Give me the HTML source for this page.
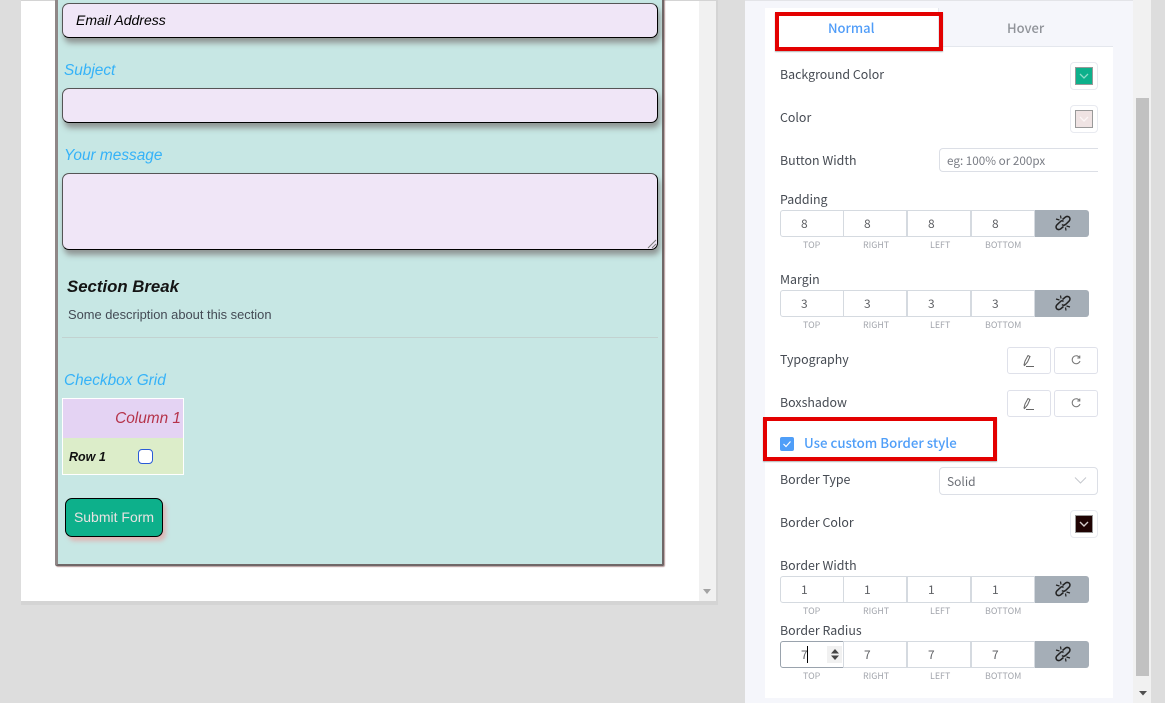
<!DOCTYPE html>
<html><head><meta charset="utf-8">
<style>
html,body{margin:0;padding:0;width:1165px;height:703px;overflow:hidden;background:#dddddd;font-family:"Liberation Sans",sans-serif}
.a{position:absolute;box-sizing:border-box}
.t{position:absolute;white-space:nowrap;line-height:16px}
.inp{position:absolute;left:62px;width:596px;background:#f0e6f7;border:1px solid #000;border-top-color:#555;border-left-color:#555;border-radius:7px;box-shadow:2px 5px 6px rgba(90,70,70,.5);box-sizing:border-box}
.lab{position:absolute;left:64px;color:#35b2f8;font-style:italic;font-size:15.4px;line-height:18px;white-space:nowrap}
.s{font-family:"Noto Sans CJK JP","Liberation Sans",sans-serif;font-size:12.4px;color:#464b53}
.box{position:absolute;height:27px;background:#fff;border:1px solid #d5dae0;box-sizing:border-box;top:0;width:64px;font-size:12px;color:#606266;line-height:25px;font-family:"Noto Sans CJK JP","Liberation Sans",sans-serif}
.box span{position:absolute;left:20px}
.cap{position:absolute;top:29px;font-size:8.9px;color:#a3a6ad;line-height:11px;font-family:"Noto Sans CJK JP","Liberation Sans",sans-serif;white-space:nowrap}
.grp{position:absolute;left:780px;width:310px;height:42px}
.link{position:absolute;left:255px;top:0;width:54px;height:27px;background:#a5aeb7;border-radius:0 3px 3px 0}
.link svg{position:absolute;left:19px;top:4px}
.sw{position:absolute;left:1070px;width:28px;height:28px;background:#fff;border:1px solid #e8eaf0;border-radius:4px;box-sizing:border-box}
.sw i{position:absolute;left:4px;top:4px;width:18px;height:18px;border:1px solid #999;box-sizing:border-box;display:block}
.sw svg{position:absolute;left:4px;top:4px}
.btn{position:absolute;width:44px;height:27px;background:#fff;border:1px solid #dfe1ea;border-radius:3px;box-sizing:border-box}
.red{position:absolute;border:4px solid #e30000;box-sizing:border-box;box-shadow:0 1px 1px rgba(0,0,0,.3)}
</style></head><body>

<!-- preview window -->
<div class="a" style="left:21px;top:0;width:697px;height:605px;background:#d4d4d4"></div>
<div class="a" style="left:21px;top:1px;width:678px;height:600px;background:#fff"></div>
<div class="a" style="left:699px;top:1px;width:17px;height:600px;background:#f1f1f1"></div>
<svg class="a" style="left:703px;top:589px" width="10" height="6"><path d="M0 0H8L4 5Z" fill="#a3a3a3"/></svg>

<!-- form -->
<div class="a" style="left:55px;top:-5px;width:609px;height:571px;background:#c7e7e4;border:2px solid #6f6767;border-left-width:3px;border-right-width:2px;border-left-color:#8f8787;border-radius:2px;box-shadow:1px 1px 1px rgba(150,110,110,.7)"></div>

<div class="inp" style="top:3px;height:35px"></div>
<div class="t" style="left:76px;top:12px;font-size:14px;font-style:italic;color:#000">Email Address</div>
<div class="lab" style="top:62px">Subject</div>
<div class="inp" style="top:88px;height:35px"></div>
<div class="lab" style="top:147px">Your message</div>
<div class="inp" style="top:173px;height:77px"></div>
<svg class="a" style="left:647px;top:239px" width="10" height="10"><path d="M1 9L9 1M5 9L9 5" stroke="#777" stroke-width="1" fill="none"/></svg>

<div class="t" style="left:67px;top:277px;font-size:16.8px;font-weight:bold;font-style:italic;color:#141414;line-height:20px">Section Break</div>
<div class="t" style="left:68px;top:307px;font-size:12.9px;color:#444b55">Some description about this section</div>
<div class="a" style="left:62px;top:337px;width:596px;height:1px;background:#c2d2d0"></div>

<div class="lab" style="top:372px">Checkbox Grid</div>
<div class="a" style="left:62px;top:398px;width:122px;height:77px;background:#fff"></div>
<div class="a" style="left:63px;top:399px;width:120px;height:39px;background:#e4d3f3"></div>
<div class="a" style="left:63px;top:438px;width:120px;height:36px;background:#dcedc9"></div>
<div class="t" style="right:984px;top:411px;font-size:15.4px;font-style:italic;color:#b5334a">Column 1</div>
<div class="t" style="left:69px;top:449px;font-size:12.5px;font-weight:bold;font-style:italic;color:#111">Row 1</div>
<div class="a" style="left:138px;top:449px;width:15px;height:15px;background:#fff;border:1.5px solid #2a5bd7;border-radius:4px"></div>

<div class="a" style="left:65px;top:498px;width:98px;height:39px;background:#0db08b;border:1px solid #000;border-radius:7px;box-shadow:3px 4px 4px rgba(235,150,150,.6)"></div>
<div class="t" style="left:65px;width:98px;text-align:center;top:509px;font-size:14px;color:#e9e2e2">Submit Form</div>

<!-- right panel -->
<div class="a" style="left:745px;top:0;width:388px;height:703px;background:#f5f6fb"></div>
<div class="a" style="left:745px;top:0;width:388px;height:1px;background:#e3e4e8"></div>
<div class="a" style="left:765px;top:8px;width:348px;height:690px;background:#fff"></div>
<div class="a" style="left:938px;top:8px;width:175px;height:39px;background:#f5f6fb;border-left:1px solid #e4e7ed;border-bottom:1px solid #e4e7ed"></div>
<div class="a" style="left:1133px;top:0;width:18px;height:703px;background:#f1f1f1"></div>
<div class="a" style="left:1136px;top:98px;width:13px;height:578px;background:#c1c1c1"></div>
<svg class="a" style="left:1139px;top:691px" width="9" height="6"><path d="M0 0H8L4 4.5Z" fill="#505050"/></svg>

<div class="t" style="left:828px;top:20px;font-family:'Noto Sans CJK JP','Liberation Sans',sans-serif;font-size:13px;font-weight:500;color:#4f9cf8">Normal</div>
<div class="t" style="left:1007px;top:20px;font-family:'Noto Sans CJK JP','Liberation Sans',sans-serif;font-size:13px;font-weight:500;color:#909399">Hover</div>

<div class="t s" style="left:780px;top:66px">Background Color</div>
<div class="sw" style="top:62px"><i style="background:#0db08b"></i><svg width="18" height="18"><path d="M5 7L9 11L13 7" stroke="#8fdcc8" stroke-width="1.300" fill="none"/></svg></div>
<div class="t s" style="left:780px;top:109px">Color</div>
<div class="sw" style="top:105px"><i style="background:#efe3e3"></i><svg width="18" height="18"><path d="M5 7L9 11L13 7" stroke="#fbf6f6" stroke-width="1.300" fill="none"/></svg></div>
<div class="t s" style="left:780px;top:152px">Button Width</div>
<div class="a" style="left:939px;top:148px;width:159px;height:24px;background:#fff;border:1px solid #dcdfe6;border-right:0;border-radius:4px 0 0 4px"></div>
<div class="t" style="left:947px;top:153px;font-family:'Noto Sans CJK JP','Liberation Sans',sans-serif;font-size:11.7px;color:#7a7d85">eg: 100% or 200px</div>

<div class="t s" style="left:780px;top:191px">Padding</div>
<div class="grp" style="top:210px">
 <div class="box" style="left:0;border-radius:3px 0 0 3px"><span>8</span></div><div class="box" style="left:63px"><span>8</span></div><div class="box" style="left:127px"><span>8</span></div><div class="box" style="left:191px"><span>8</span></div>
 <div class="link"><svg width="18" height="18" viewBox="0 0 18 18"><path d="M8.500 5.500L11.500 3Q13.500 1.800 15.300 3.200Q16.800 5.200 15 7.200L11.500 10.500Q9.500 12 8 10.500M9.500 7.500Q8 6 6.500 7.500L3 10.800Q1.200 12.800 2.700 14.800Q4.500 16.200 6.500 15L9.500 12.500" stroke="#222" stroke-width="1.500" fill="none"/><path d="M12.500 12L16 13M11.500 13.500L12 16.500M5.500 6L2 5M7 4.500L6.500 1.500" stroke="#222" stroke-width="1.200" fill="none"/></svg></div>
 <div class="cap" style="left:23px">TOP</div><div class="cap" style="left:83px">RIGHT</div><div class="cap" style="left:150px">LEFT</div><div class="cap" style="left:205px">BOTTOM</div>
</div>

<div class="t s" style="left:780px;top:271px">Margin</div>
<div class="grp" style="top:290px">
 <div class="box" style="left:0;border-radius:3px 0 0 3px"><span>3</span></div><div class="box" style="left:63px"><span>3</span></div><div class="box" style="left:127px"><span>3</span></div><div class="box" style="left:191px"><span>3</span></div>
 <div class="link"><svg width="18" height="18" viewBox="0 0 18 18"><path d="M8.500 5.500L11.500 3Q13.500 1.800 15.300 3.200Q16.800 5.200 15 7.200L11.500 10.500Q9.500 12 8 10.500M9.500 7.500Q8 6 6.500 7.500L3 10.800Q1.200 12.800 2.700 14.800Q4.500 16.200 6.500 15L9.500 12.500" stroke="#222" stroke-width="1.500" fill="none"/><path d="M12.500 12L16 13M11.500 13.500L12 16.500M5.500 6L2 5M7 4.500L6.500 1.500" stroke="#222" stroke-width="1.200" fill="none"/></svg></div>
 <div class="cap" style="left:23px">TOP</div><div class="cap" style="left:83px">RIGHT</div><div class="cap" style="left:150px">LEFT</div><div class="cap" style="left:205px">BOTTOM</div>
</div>

<div class="t s" style="left:780px;top:351px">Typography</div>
<div class="btn" style="left:1007px;top:347px"><svg style="position:absolute;left:14px;top:6px" width="16" height="14" viewBox="0 0 16 14"><path d="M2 11L3 7L6 1.500L8 2.500L5.500 8L2.500 11.500ZM4 12.500H12" stroke="#666" fill="none"/></svg></div>
<div class="btn" style="left:1054px;top:347px"><svg style="position:absolute;left:14px;top:6px" width="14" height="14" viewBox="0 0 14 14"><path d="M10.500 3.500A4 4 0 1 0 11 7M10.800 1.500V4H8.300" stroke="#777" fill="none"/></svg></div>
<div class="t s" style="left:780px;top:394px">Boxshadow</div>
<div class="btn" style="left:1007px;top:390px"><svg style="position:absolute;left:14px;top:6px" width="16" height="14" viewBox="0 0 16 14"><path d="M2 11L3 7L6 1.500L8 2.500L5.500 8L2.500 11.500ZM4 12.500H12" stroke="#666" fill="none"/></svg></div>
<div class="btn" style="left:1054px;top:390px"><svg style="position:absolute;left:14px;top:6px" width="14" height="14" viewBox="0 0 14 14"><path d="M10.500 3.500A4 4 0 1 0 11 7M10.800 1.500V4H8.300" stroke="#777" fill="none"/></svg></div>

<div class="a" style="left:780px;top:437px;width:14px;height:14px;background:#4f9ef8;border-radius:2px"></div>
<svg class="a" style="left:780px;top:437px" width="14" height="14"><path d="M3.500 7L6 9.500L10.500 4.500" stroke="#fff" stroke-width="1.200" fill="none"/></svg>
<div class="t" style="left:804px;top:435px;font-family:'Noto Sans CJK JP','Liberation Sans',sans-serif;font-size:13.25px;font-weight:500;color:#4f9ef8">Use custom Border style</div>

<div class="t s" style="left:780px;top:471px">Border Type</div>
<div class="a" style="left:939px;top:467px;width:159px;height:28px;background:#fff;border:1px solid #dcdfe6;border-radius:4px"></div>
<div class="t" style="left:947px;top:474px;font-family:'Noto Sans CJK JP','Liberation Sans',sans-serif;font-size:12px;color:#6c6f76">Solid</div>
<svg class="a" style="left:1074px;top:476px" width="13" height="9"><path d="M1 1.500L6.500 7L12 1.500" stroke="#c5c8ce" fill="none"/></svg>

<div class="t s" style="left:780px;top:514px">Border Color</div>
<div class="sw" style="top:510px"><i style="background:#1f0303"></i><svg width="18" height="18"><path d="M5 7L9 11L13 7" stroke="#d5cccc" stroke-width="1.400" fill="none"/></svg></div>

<div class="t s" style="left:780px;top:557px">Border Width</div>
<div class="grp" style="top:576px">
 <div class="box" style="left:0;border-radius:3px 0 0 3px"><span>1</span></div><div class="box" style="left:63px"><span>1</span></div><div class="box" style="left:127px"><span>1</span></div><div class="box" style="left:191px"><span>1</span></div>
 <div class="link"><svg width="18" height="18" viewBox="0 0 18 18"><path d="M8.500 5.500L11.500 3Q13.500 1.800 15.300 3.200Q16.800 5.200 15 7.200L11.500 10.500Q9.500 12 8 10.500M9.500 7.500Q8 6 6.500 7.500L3 10.800Q1.200 12.800 2.700 14.800Q4.500 16.200 6.500 15L9.500 12.500" stroke="#222" stroke-width="1.500" fill="none"/><path d="M12.500 12L16 13M11.500 13.500L12 16.500M5.500 6L2 5M7 4.500L6.500 1.500" stroke="#222" stroke-width="1.200" fill="none"/></svg></div>
 <div class="cap" style="left:23px">TOP</div><div class="cap" style="left:83px">RIGHT</div><div class="cap" style="left:150px">LEFT</div><div class="cap" style="left:205px">BOTTOM</div>
</div>

<div class="t s" style="left:780px;top:622px">Border Radius</div>
<div class="grp" style="top:641px">
 <div class="box" style="left:0;border-radius:3px 0 0 3px;border-color:#9aa3ad"><span>7</span></div><div class="box" style="left:63px"><span>7</span></div><div class="box" style="left:127px"><span>7</span></div><div class="box" style="left:191px"><span>7</span></div>
 <div class="a" style="left:47px;top:5px;width:15px;height:17px;background:#f1f1f1"></div>
 <svg class="a" style="left:50px;top:7px" width="10" height="13"><path d="M1 5.500L5 1L9 5.500ZM1 7.500H9L5 12Z" fill="#444"/></svg>
 <div class="a" style="left:27px;top:5px;width:1px;height:17px;background:#000"></div>
 <div class="link"><svg width="18" height="18" viewBox="0 0 18 18"><path d="M8.500 5.500L11.500 3Q13.500 1.800 15.300 3.200Q16.800 5.200 15 7.200L11.500 10.500Q9.500 12 8 10.500M9.500 7.500Q8 6 6.500 7.500L3 10.800Q1.200 12.800 2.700 14.800Q4.500 16.200 6.500 15L9.500 12.500" stroke="#222" stroke-width="1.500" fill="none"/><path d="M12.500 12L16 13M11.500 13.500L12 16.500M5.500 6L2 5M7 4.500L6.500 1.500" stroke="#222" stroke-width="1.200" fill="none"/></svg></div>
 <div class="cap" style="left:23px">TOP</div><div class="cap" style="left:83px">RIGHT</div><div class="cap" style="left:150px">LEFT</div><div class="cap" style="left:205px">BOTTOM</div>
</div>

<div class="red" style="left:775px;top:12px;width:168px;height:39px"></div>
<div class="red" style="left:763px;top:417px;width:234px;height:44px"></div>
</body></html>
